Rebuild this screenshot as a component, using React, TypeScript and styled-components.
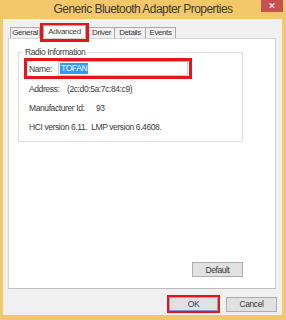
import React from 'react';
import styled, { createGlobalStyle, css } from 'styled-components';

const palette = {
  frame: '#F2C86A',
  client: '#F0F0F0',
  text: '#3A3A3A',
  mark: '#E8141C',
  line: '#D5D5D5',
  tabLine: '#ACACAC',
  select: '#3399FF',
};

// the dialog was shot with Segoe UI and scaled down, so Arial metrics get squeezed a bit
const font = '"Liberation Sans", Arial, sans-serif';

const GlobalStyle = createGlobalStyle`
  html, body {
    margin: 0;
    padding: 0;
    background: ${palette.frame};
  }
  * {
    box-sizing: border-box;
  }
`;

const Window = styled.div`
  display: flex;
  flex-direction: column;
  width: 286px;
  height: 320px;
  background: ${palette.frame};
  font-family: ${font};
  font-size: 8.5px;
  letter-spacing: -0.4px;
  color: ${palette.text};
`;

const TitleBar = styled.div`
  display: grid;
  grid-template-columns: 1fr auto 1fr;
  align-items: start;
  height: 19px;
`;

const Title = styled.div`
  grid-column: 2;
  font-size: 12px;
  letter-spacing: -0.55px;
  line-height: 19px;
  color: #3c3a33;
`;

const CloseButton = styled.div`
  grid-column: 3;
  justify-self: end;
  display: flex;
  align-items: center;
  justify-content: center;
  width: 22px;
  height: 12px;
  margin-right: 3px;
  background: #c75050;
  color: #fff;
  font-family: 'DejaVu Sans', sans-serif;
  font-size: 9px;
  font-weight: bold;
  letter-spacing: 0;
`;

const Client = styled.div`
  flex: 1;
  display: flex;
  flex-direction: column;
  margin: 0 4px 5px 3px;
  background: ${palette.client};
`;

const TabRow = styled.div`
  display: flex;
  align-items: flex-end;
  height: 15px;
  margin-top: 4px;
  padding-left: 8px;
`;

const Tab = styled.div<{ width: number; active?: boolean }>`
  width: ${(p) => p.width}px;
  height: 11px;
  border: 1px solid ${palette.tabLine};
  border-bottom: none;
  margin-left: -1px;
  background: #f0f0f0;
  font-size: 8px;
  line-height: 10px;
  text-align: center;
  white-space: nowrap;

  ${(p) =>
    p.active &&
    css`
      height: 13px;
      margin: 0;
      background: #fff;
      line-height: 12px;
    `}
`;

const Mark = styled.div`
  display: flex;
  border: 3px solid ${palette.mark};
`;

const TabMark = styled(Mark)`
  position: relative;
  z-index: 1;
  align-items: flex-end;
  width: 49px;
  height: 19px;
  margin-bottom: -4px;
  padding: 0 0 1px 0;
`;

const Panel = styled.div`
  flex: 1;
  display: flex;
  flex-direction: column;
  margin: 0 6px 0 5px;
  padding: 7px 32px 11px 9px;
  background: #fff;
  border: 1px solid ${palette.line};
  border-bottom-color: #bdbdbd;
`;

const Group = styled.fieldset`
  margin: 0;
  padding: 0 0 5px 5px;
  border: 1px solid #dedede;
  min-width: 0;
`;

const Legend = styled.legend`
  margin-left: -1px;
  padding: 0 2px;
  line-height: 12px;
`;

const NameMark = styled(Mark)`
  align-items: center;
  width: 168px;
  height: 21px;
  padding: 0 1px 0 2px;
`;

const Label = styled.span<{ width?: number }>`
  flex: none;
  width: ${(p) => (p.width ? `${p.width}px` : 'auto')};
`;

const NameInput = styled.div`
  flex: 1;
  display: flex;
  align-items: center;
  height: 15px;
  padding-left: 1px;
  border: 1px solid #c5cad3;
  border-top-color: #a7b4c9;
`;

const Selected = styled.span`
  padding: 0 1px;
  background: ${palette.select};
  color: #fff;
  line-height: 11px;
`;

const InfoRow = styled.div`
  display: flex;
  align-items: center;
  height: 19px;
  padding-left: 5px;
  white-space: pre;
`;

const PanelFooter = styled.div`
  display: flex;
  justify-content: flex-end;
  margin-top: auto;
`;

const Button = styled.div<{ primary?: boolean }>`
  display: flex;
  align-items: center;
  justify-content: center;
  width: 51px;
  height: 15px;
  background: #e1e1e1;
  border: 1px solid #adadad;

  ${(p) =>
    p.primary &&
    css`
      width: 49px;
      height: 14px;
      border-color: #9aa8c0;
      border-bottom-color: #7f8fd0;
    `}
`;

const Footer = styled.div`
  display: flex;
  justify-content: flex-end;
  align-items: center;
  gap: 6px;
  height: 18px;
  margin: 6px 5px 2px 0;
`;

const ButtonMark = styled(Mark)`
  border-width: 2px;
`;

const tabs = [
  { label: 'General', width: 30 },
  { label: 'Advanced', width: 43 },
  { label: 'Driver', width: 27 },
  { label: 'Details', width: 32 },
  { label: 'Events', width: 31 },
];

export default function App() {
  return (
    <>
      <GlobalStyle />
      <Window>
        <TitleBar>
          <Title>Generic Bluetooth Adapter Properties</Title>
          <CloseButton>✕</CloseButton>
        </TitleBar>
        <Client>
          <TabRow>
            {tabs.map((t) =>
              t.label === 'Advanced' ? (
                <TabMark key={t.label}>
                  <Tab width={t.width} active>
                    {t.label}
                  </Tab>
                </TabMark>
              ) : (
                <Tab key={t.label} width={t.width}>
                  {t.label}
                </Tab>
              )
            )}
          </TabRow>
          <Panel>
            <Group>
              <Legend>Radio Information</Legend>
              <NameMark>
                <Label width={29}>Name:</Label>
                <NameInput>
                  <Selected>TOFAN</Selected>
                </NameInput>
              </NameMark>
              <InfoRow>
                <Label width={38}>Address:</Label>
                (2c:d0:5a:7c:84:c9)
              </InfoRow>
              <InfoRow>
                <Label width={67}>Manufacturer Id:</Label>
                93
              </InfoRow>
              <InfoRow>HCI version 6.11.  LMP version 6.4608.</InfoRow>
            </Group>
            <PanelFooter>
              <Button>Default</Button>
            </PanelFooter>
          </Panel>
          <Footer>
            <ButtonMark>
              <Button primary>OK</Button>
            </ButtonMark>
            <Button>Cancel</Button>
          </Footer>
        </Client>
      </Window>
    </>
  );
}
